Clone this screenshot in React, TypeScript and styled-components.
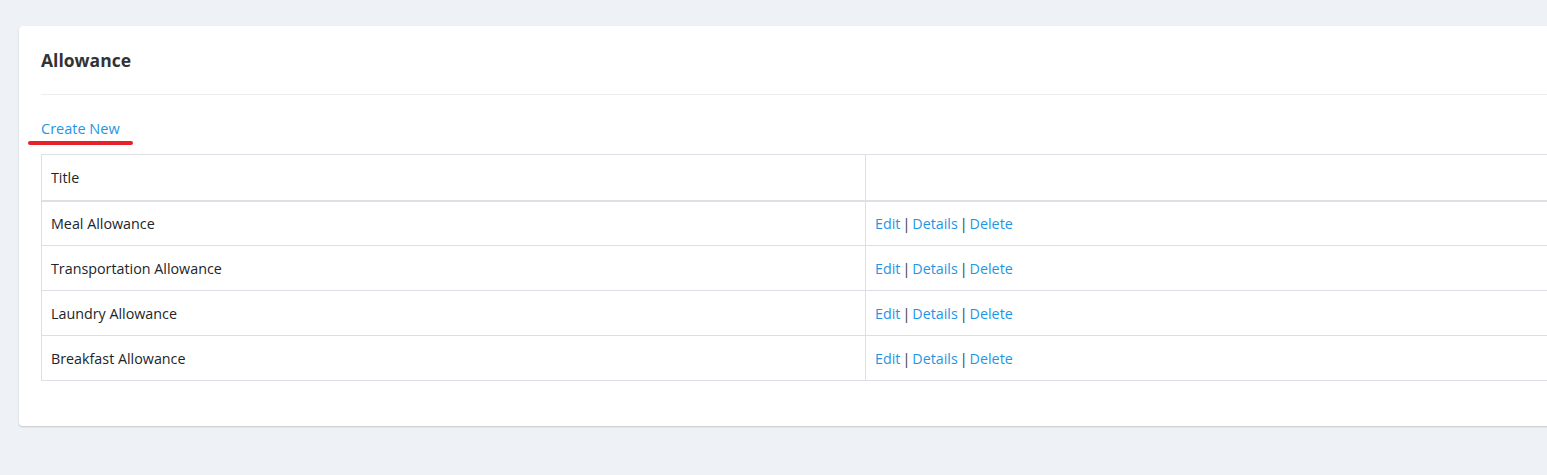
import React from "react";
import styled, { createGlobalStyle } from "styled-components";

const Global = createGlobalStyle`
  html, body { margin: 0; padding: 0; }
  body {
    background: #eef1f5;
    font-family: "Open Sans", "Noto Sans", sans-serif;
    color: #212529;
    overflow: hidden;
    width: 1547px;
    height: 475px;
  }
`;

const Page = styled.div`
  padding: 26px 0 0 19px;
`;

const Card = styled.section`
  width: 1600px;
  background: #fff;
  border-radius: 4px;
  box-shadow: 0 1px 2px rgba(0, 0, 0, 0.18);
  padding: 0 22px 45px 22px;
  box-sizing: border-box;
`;

const Header = styled.header`
  height: 68px;
  display: flex;
  align-items: center;
  border-bottom: 1px solid #ebedf0;
`;

const Title = styled.h1`
  margin: 0;
  font-size: 17.5px;
  font-weight: 700;
  color: #333;
`;

const Toolbar = styled.div`
  position: relative;
  padding-top: 22px;
  height: 59px;
  box-sizing: border-box;
`;

const CreateLink = styled.a`
  font-size: 14.5px;
  line-height: 20px;
  color: #1e96e6;
  text-decoration: none;
`;

const Annotation = styled.span`
  position: absolute;
  left: -13px;
  top: 46px;
  width: 105px;
  height: 4px;
  border-radius: 2px;
  background: #e8202a;
`;

const Table = styled.table`
  width: 100%;
  border-collapse: collapse;
  font-size: 14.3px;
`;

const Th = styled.th<{ $w?: number }>`
  text-align: left;
  font-weight: 400;
  height: 46px;
  padding: 0 9px;
  border: 1px solid #dcdfe3;
  border-bottom: 2px solid #dcdfe3;
  width: ${(p) => (p.$w ? `${p.$w}px` : "auto")};
  box-sizing: border-box;
`;

const Td = styled.td`
  height: 45px;
  padding: 0 9px;
  border: 1px solid #dcdfe3;
  box-sizing: border-box;
`;

const ActionLink = styled.a`
  color: #1e96e6;
  text-decoration: none;
`;

const Sep = styled.span`
  color: #3a3a3a;
  margin: 0 2px;
`;

const rows = [
  "Meal Allowance",
  "Transportation Allowance",
  "Laundry Allowance",
  "Breakfast Allowance",
];

export default function App() {
  return (
    <>
      <Global />
      <Page>
        <Card>
          <Header>
            <Title>Allowance</Title>
          </Header>
          <Toolbar>
            <CreateLink href="#">Create New</CreateLink>
            <Annotation />
          </Toolbar>
          <Table>
            <thead>
              <tr>
                <Th $w={824}>Title</Th>
                <Th />
              </tr>
            </thead>
            <tbody>
              {rows.map((r) => (
                <tr key={r}>
                  <Td>{r}</Td>
                  <Td>
                    <ActionLink href="#">Edit</ActionLink>
                    <Sep>|</Sep>
                    <ActionLink href="#">Details</ActionLink>
                    <Sep>|</Sep>
                    <ActionLink href="#">Delete</ActionLink>
                  </Td>
                </tr>
              ))}
            </tbody>
          </Table>
        </Card>
      </Page>
    </>
  );
}
